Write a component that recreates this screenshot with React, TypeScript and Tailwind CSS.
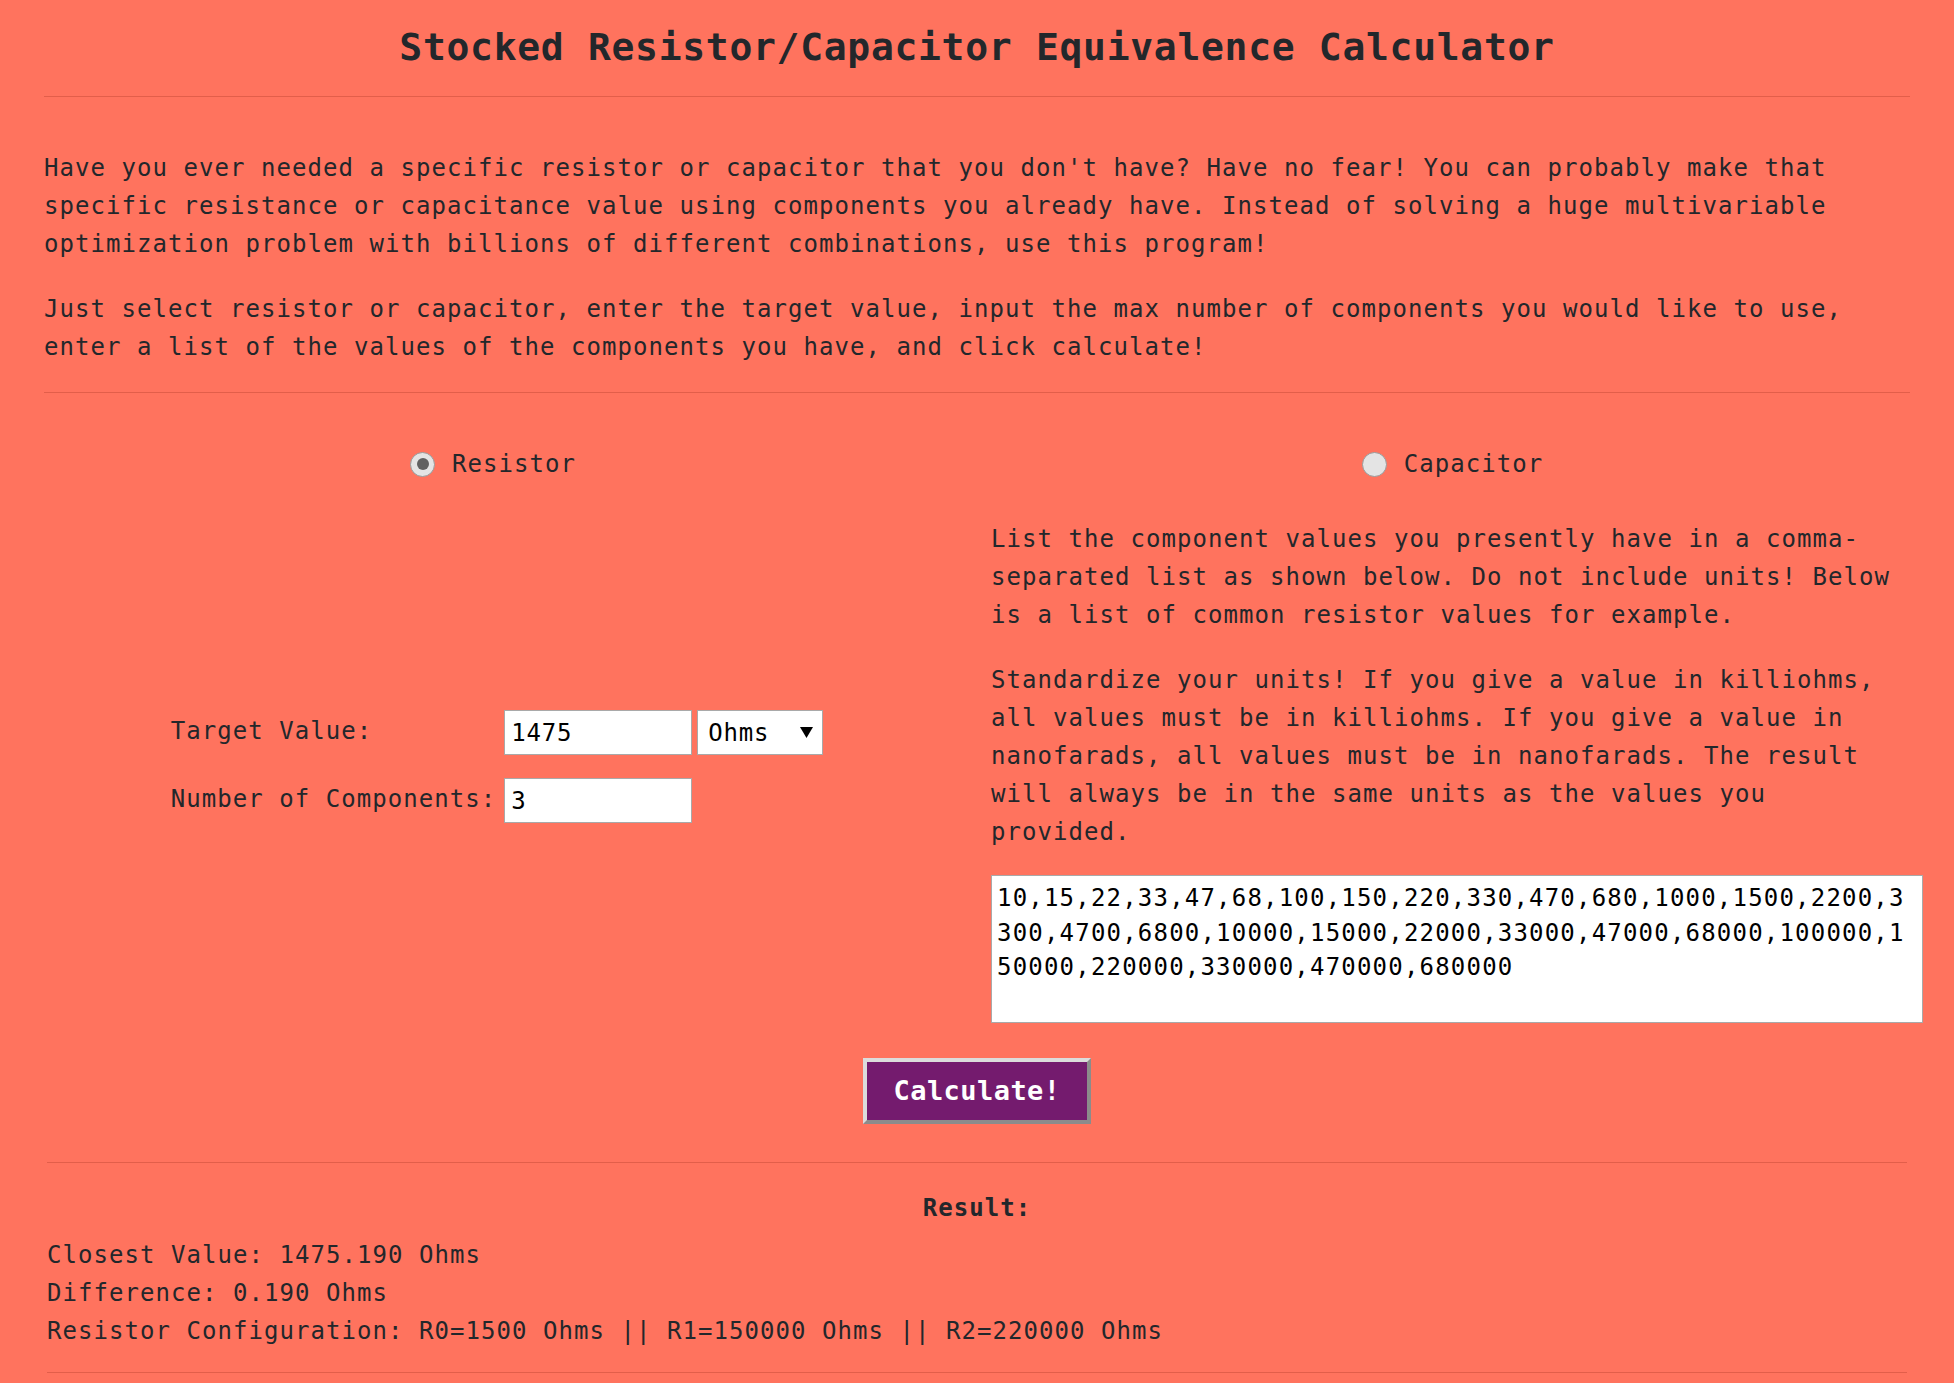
import React from 'react';

const resistorValues =
  '10,15,22,33,47,68,100,150,220,330,470,680,1000,1500,2200,3300,4700,6800,10000,15000,22000,33000,47000,68000,100000,150000,220000,330000,470000,680000';

// little custom radio so it looks like the grey chrome one
const Radio = ({ checked }: { checked?: boolean }) => (
  <span className="flex h-[25px] w-[25px] shrink-0 items-center justify-center rounded-full border border-[#9a9a9a] bg-[#e4e4e4]">
    {checked && <span className="h-[12px] w-[12px] rounded-full bg-[#616161]" />}
  </span>
);

const App = () => {
  return (
    <div className="min-h-screen bg-[#ff735e] px-[44px] pb-[10px] font-['DejaVu_Sans_Mono',monospace] text-[24px] leading-[38px] tracking-[1.05px] text-[#23272b]">
      <h1 className="pt-[24px] text-center text-[38px] leading-[46px] font-bold tracking-[0.7px]">
        Stocked Resistor/Capacitor Equivalence Calculator
      </h1>
      <hr className="mt-[26px] border-[#e25e4a]" />

      <p className="mt-[52px]">
        Have you ever needed a specific resistor or capacitor that you don't have? Have no fear! You can probably make
        that specific resistance or capacitance value using components you already have. Instead of solving a huge
        multivariable optimization problem with billions of different combinations, use this program!
      </p>
      <p className="mt-[27px]">
        Just select resistor or capacitor, enter the target value, input the max number of components you would like to
        use, enter a list of the values of the components you have, and click calculate!
      </p>
      <hr className="mt-[26px] border-[#e25e4a]" />

      <div className="mt-[52px] grid grid-cols-[906px_919px] gap-x-[41px] gap-y-[37px]">
        <label className="flex items-center justify-center gap-[17px] pr-[8px]">
          <Radio checked />
          <span>Resistor</span>
        </label>
        <label className="flex items-center justify-center gap-[17px] pl-[4px]">
          <Radio />
          <span>Capacitor</span>
        </label>

        <div className="flex items-center justify-center pb-[10px]">
          <div className="grid grid-cols-[auto_auto] items-center gap-x-[8px] gap-y-[23px]">
            <span className="-mt-[4px]">Target Value:</span>
            <div className="flex gap-[5px]">
              <input
                defaultValue="1475"
                className="h-[45px] w-[188px] border border-[#a9a9a9] bg-white pl-[6px] text-[24px] tracking-[0.8px] text-black outline-none"
              />
              <div className="relative">
                <select className="h-[45px] w-[126px] appearance-none border border-[#a9a9a9] bg-white pl-[10px] text-[24px] tracking-[0.8px] text-black outline-none">
                  <option>Ohms</option>
                  <option>Farads</option>
                </select>
                <svg className="pointer-events-none absolute right-[10px] top-[17px]" width="13" height="11" viewBox="0 0 13 11">
                  <path d="M0 0 H13 L6.5 11 Z" fill="#000" />
                </svg>
              </div>
            </div>
            <span className="-mt-[4px]">Number of Components:</span>
            <div>
              <input
                defaultValue="3"
                className="h-[45px] w-[188px] border border-[#a9a9a9] bg-white pl-[6px] text-[24px] tracking-[0.8px] text-black outline-none"
              />
            </div>
          </div>
        </div>

        <div>
          <p>
            List the component values you presently have in a comma-separated list as shown below. Do not include
            units! Below is a list of common resistor values for example.
          </p>
          <p className="mt-[27px]">
            Standardize your units! If you give a value in killiohms, all values must be in killiohms. If you give a
            value in nanofarads, all values must be in nanofarads. The result will always be in the same units as the
            values you provided.
          </p>
          <textarea
            defaultValue={resistorValues}
            className="mt-[24px] block h-[148px] w-[932px] resize-none border border-[#a9a9a9] bg-white pt-[5px] pl-[5px] pr-[10px] text-[24px] leading-[34.5px] tracking-[1.2px] text-black outline-none"
          />
        </div>
      </div>

      <div className="mt-[35px] flex justify-center">
        <button className="h-[66px] w-[228px] border-[4px] border-t-[#dcdcdc] border-l-[#dcdcdc] border-r-[#8b8b8b] border-b-[#8b8b8b] bg-[#741b6e] text-[27px] font-bold tracking-[0.45px] text-white">
          Calculate!
        </button>
      </div>

      <div className="mx-[3px]">
        <hr className="mt-[38px] border-[#e25e4a]" />
        <div className="mt-[26px] text-center font-bold">Result:</div>
        <div className="mt-[9px]">
          <div>Closest Value: 1475.190 Ohms</div>
          <div>Difference: 0.190 Ohms</div>
          <div>Resistor Configuration: R0=1500 Ohms || R1=150000 Ohms || R2=220000 Ohms</div>
        </div>
        <hr className="mt-[22px] border-[#e25e4a]" />
      </div>
    </div>
  );
};

export default App;
